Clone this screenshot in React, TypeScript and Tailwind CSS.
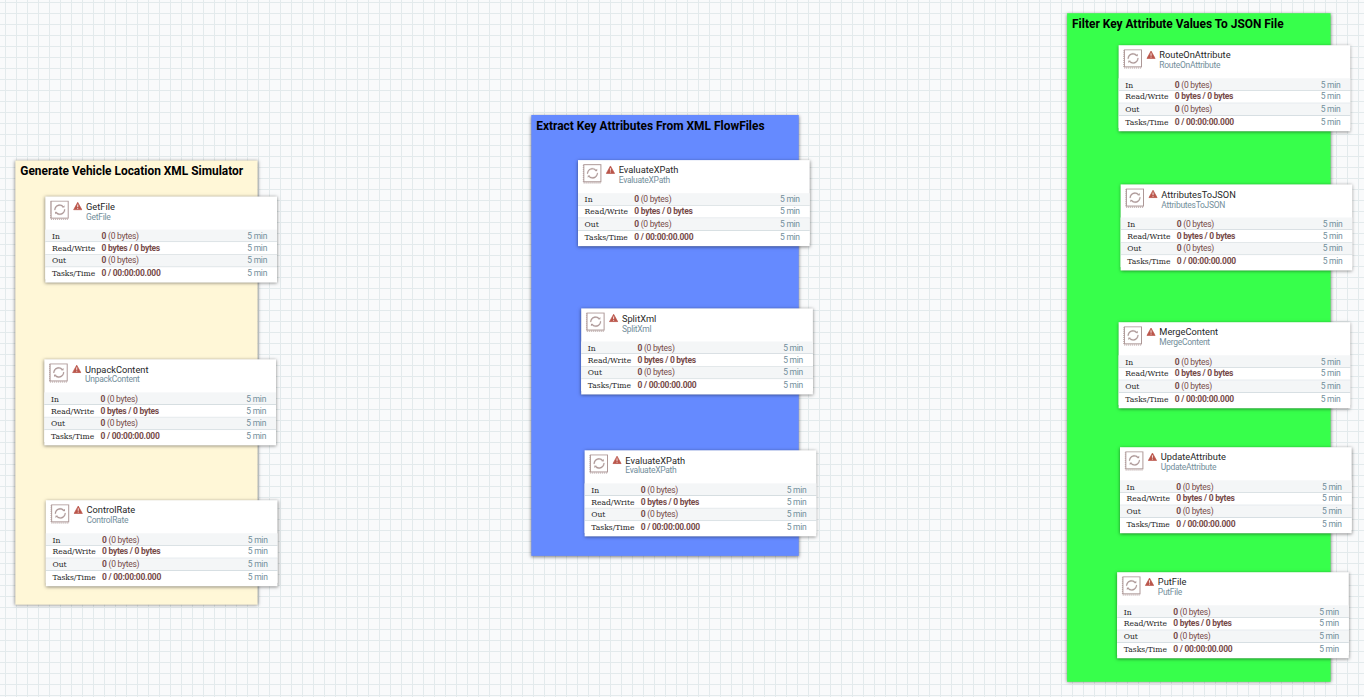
import React from 'react';

type Processor = { x: number; y: number; name: string };
type Zone = { x: number; y: number; w: number; h: number; title: string; color: string };

const SCALE = 0.662;

const place = (x: number, y: number) => `translate(${x}px, ${y}px) scale(${SCALE})`;

const zones: Zone[] = [
  { x: 15.3, y: 160.5, w: 242.5, h: 444.5, title: 'Generate Vehicle Location XML Simulator', color: 'bg-[#fff7d7]' },
  { x: 531.3, y: 115, w: 267.5, h: 441, title: 'Extract Key Attributes From XML FlowFiles', color: 'bg-[#658aff]' },
  { x: 1067.1, y: 13.2, w: 263.8, h: 668.5, title: 'Filter Key Attribute Values To JSON File', color: 'bg-[#37ff4b]' },
];

const processors: Processor[] = [
  { x: 45.3, y: 196.5, name: 'GetFile' },
  { x: 44.3, y: 359.3, name: 'UnpackContent' },
  { x: 45.8, y: 500.2, name: 'ControlRate' },
  { x: 578, y: 160.1, name: 'EvaluateXPath' },
  { x: 581.2, y: 308.4, name: 'SplitXml' },
  { x: 584.6, y: 450.3, name: 'EvaluateXPath' },
  { x: 1118.6, y: 45.2, name: 'RouteOnAttribute' },
  { x: 1120.6, y: 184.4, name: 'AttributesToJSON' },
  { x: 1118.6, y: 322.2, name: 'MergeContent' },
  { x: 1120.0, y: 447.2, name: 'UpdateAttribute' },
  { x: 1117.1, y: 572.2, name: 'PutFile' },
];

const rows = [
  { label: 'In', strong: '0', rest: ' (0 bytes)', style: 'h-[19px] bg-[#f4f6f7] border-b border-[#c7d2d7] pt-[1px]' },
  { label: 'Read/Write', strong: '0 bytes / 0 bytes', rest: '', style: 'h-[19px] bg-white border-b border-[#c7d2d7]' },
  { label: 'Out', strong: '0', rest: ' (0 bytes)', style: 'h-[19px] bg-[#f4f6f7] border-b border-[#c7d2d7]' },
  { label: 'Tasks/Time', strong: '0 / 00:00:00.000', rest: '', style: 'h-[18px] bg-white' },
];

function ProcessorIcon() {
  return (
    <svg className="block h-[30px] w-[30px]" viewBox="0 0 20 20" fill="none" stroke="#ad9897">
      <rect x="1.2" y="0.6" width="17.2" height="17.2" strokeWidth="1" />
      <path d="M0.5 1v18M1 18.900h18" strokeWidth="1.1" strokeDasharray="1 1" />
      <path d="M4.500 9.700C4.500 6.300 7 4.100 9.900 4.100c1.600 0 3 .7 4 2l-1 .6C11.900 5.700 10.900 5.300 9.800 5.300 7.500 5.300 5.700 6.800 5.300 9.700z" fill="#ad9897" stroke="#ad9897" strokeWidth=".25" />
      <path d="M12.300 7l2.300.2.100-2.500z" fill="#ad9897" stroke="none" />
      <path d="M15.300 8.900C15.300 12.300 12.800 14.500 9.900 14.500c-1.600 0-3-.7-4-2l1-.6c1 1 2 1.400 3.100 1.400 2.300 0 4.100-1.500 4.500-4.400z" fill="#ad9897" stroke="#ad9897" strokeWidth=".25" />
      <path d="M7.500 11.600l-2.300-.2-.1 2.500z" fill="#ad9897" stroke="none" />
    </svg>
  );
}

function WarningIcon() {
  return (
    <svg className="block h-[13px] w-[14px]" viewBox="0 0 14 13">
      <path d="M7 0.8L13.300 12.200H0.700z" fill="#ba554a" stroke="#ba554a" strokeWidth="1" strokeLinejoin="round" />
      <path d="M7 4.200v3.800M7 9.200v1.500" stroke="#fff" strokeWidth="1.300" />
    </svg>
  );
}

function ProcessorCard({ x, y, name }: Processor) {
  return (
    <article
      className="absolute left-0 top-0 flex h-[130px] w-[350px] origin-top-left flex-col bg-white shadow-[0_1px_5px_rgba(0,0,0,0.5)]"
      style={{ transform: place(x, y) }}
    >
      <header className="flex h-[50px] shrink-0 pl-[7px] pt-[5.5px]">
        <ProcessorIcon />
        <div className="ml-[4.500px] pt-[2.500px]"><WarningIcon /></div>
        <div className="ml-[6px] whitespace-nowrap">
          <div className="h-[17px] text-[14px] leading-[18px] text-[#262626]">{name}</div>
          <div className="text-[12.8px] leading-[15px] tracking-[-0.4px] text-[#728e9b]">{name}</div>
        </div>
      </header>
      {rows.map((row) => (
        <div key={row.label} className={`flex shrink-0 items-center whitespace-nowrap pl-[10px] pr-[15px] text-[12.8px] leading-[14px] tracking-[-0.4px] ${row.style}`}>
          <span className="w-[75px] font-['Roboto_Slab','DejaVu_Serif',serif] text-[11.5px] tracking-normal text-[#262626]">{row.label}</span>
          <span className="flex-1 whitespace-pre text-[#774b49]"><b className="font-bold">{row.strong}</b>{row.rest}</span>
          <span className="text-[#728e9b]">5 min</span>
        </div>
      ))}
    </article>
  );
}

function ZoneLabel({ x, y, w, h, title, color }: Zone) {
  return (
    <section
      className={`absolute left-0 top-0 origin-top-left px-[7.500px] pt-[3.500px] shadow-[0_1px_5px_rgba(0,0,0,0.5)] ${color}`}
      style={{ width: w / SCALE, height: h / SCALE, transform: place(x, y) }}
    >
      <h2 className="whitespace-nowrap text-[18px] font-bold leading-[24px] text-black">{title}</h2>
    </section>
  );
}

export default function App() {
  return (
    <main className="relative h-[697px] w-[1364px] overflow-hidden bg-[#f9fafb] bg-[linear-gradient(to_right,#e3eaec_1px,transparent_1.5px),linear-gradient(to_bottom,#e3eaec_1px,transparent_1.5px)] bg-[size:11px_11px] bg-[position:5px_2px] font-['Roboto',sans-serif]">
      {zones.map((z) => (
        <ZoneLabel key={z.title} {...z} />
      ))}
      {processors.map((p) => (
        <ProcessorCard key={`${p.x}-${p.y}`} {...p} />
      ))}
    </main>
  );
}
